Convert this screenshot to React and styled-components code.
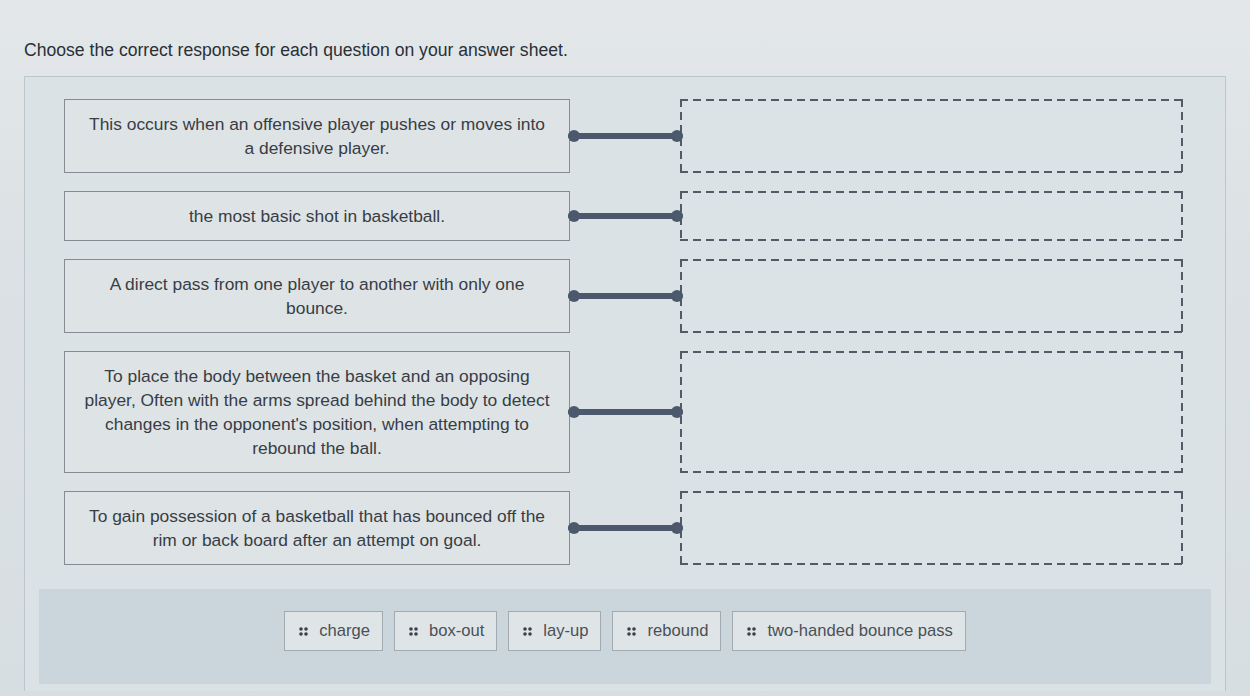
import React from 'react';
import styled, { createGlobalStyle } from 'styled-components';

const GlobalStyle = createGlobalStyle`
  * { box-sizing: border-box; }
  html, body {
    margin: 0;
    padding: 0;
    background: linear-gradient(180deg, #e3e7e9 0%, #dbe1e4 40%, #d7dee1 100%);
    font-family: "Liberation Sans", Arial, sans-serif;
    color: #33383f;
  }
`;

const Page = styled.div`
  width: 1250px;
  height: 696px;
  padding: 40px 24px 0 24px;
  overflow: hidden;
`;

const Instructions = styled.p`
  margin: 0 0 16px;
  font-size: 17.6px;
  line-height: 20px;
  color: #2a2f36;
`;

const Panel = styled.div`
  border: 1px solid #bcc6cb;
  border-bottom: none;
  background: #dbe2e5;
  padding: 22px 14px 7px;
`;

const Rows = styled.div`
  display: flex;
  flex-direction: column;
  gap: 18px;
  padding: 0 28px 0 25px;
`;

const Row = styled.div`
  display: grid;
  grid-template-columns: 506px 110px 1fr;
  align-items: stretch;
`;

const Prompt = styled.div`
  border: 1px solid #858d94;
  background: #dee4e6;
  padding: 12px 10px;
  text-align: center;
  font-size: 17.4px;
  line-height: 24px;
  color: #383d45;
`;

const Link = styled.div`
  position: relative;
  display: flex;
  align-items: center;
  margin: 0 -3px 0 -2px;

  &::before {
    content: '';
    flex: 1;
    height: 6px;
    background: #4c586b;
    border-radius: 3px;
  }
`;

const Dot = styled.span`
  position: absolute;
  top: 50%;
  ${p => (p.$side === 'left' ? 'left: 0;' : 'right: 0;')}
  width: 12px;
  height: 12px;
  margin-top: -6px;
  border-radius: 50%;
  background: #4c586b;
`;

const dash = '#535b67';

const Target = styled.div`
  background:
    repeating-linear-gradient(90deg, ${dash} 0 8px, transparent 8px 13px) top left / 100% 2px no-repeat,
    repeating-linear-gradient(90deg, ${dash} 0 8px, transparent 8px 13px) bottom left / 100% 2px no-repeat,
    repeating-linear-gradient(180deg, ${dash} 0 8px, transparent 8px 13px) top left / 2px 100% no-repeat,
    repeating-linear-gradient(180deg, ${dash} 0 8px, transparent 8px 13px) top right / 2px 100% no-repeat,
    #dce3e6;
`;

const Tray = styled.div`
  margin-top: 24px;
  background: #cbd6dc;
  padding: 22px 0 33px;
  display: flex;
  justify-content: center;
  gap: 11px;
`;

const Chip = styled.div`
  display: flex;
  align-items: center;
  gap: 11px;
  height: 40px;
  padding: 0 12px 0 14px;
  border: 1px solid #a3abb2;
  background: #dfe5e7;
  font-size: 16.6px;
  color: #4a5058;
`;

const Grip = () => (
  <svg width="9" height="9" viewBox="0 0 9 9">
    <circle cx="2" cy="2" r="1.8" fill="#3b4149" />
    <circle cx="7" cy="2" r="1.8" fill="#3b4149" />
    <circle cx="2" cy="7" r="1.8" fill="#3b4149" />
    <circle cx="7" cy="7" r="1.8" fill="#3b4149" />
  </svg>
);

const prompts = [
  ['This occurs when an offensive player pushes or moves into', 'a defensive player.'],
  ['the most basic shot in basketball.'],
  ['A direct pass from one player to another with only one', 'bounce.'],
  [
    'To place the body between the basket and an opposing',
    'player, Often with the arms spread behind the body to detect',
    "changes in the opponent's position, when attempting to",
    'rebound the ball.',
  ],
  ['To gain possession of a basketball that has bounced off the', 'rim or back board after an attempt on goal.'],
];

const answers = ['charge', 'box-out', 'lay-up', 'rebound', 'two-handed bounce pass'];

export default function App() {
  return (
    <Page>
      <GlobalStyle />
      <Instructions>Choose the correct response for each question on your answer sheet.</Instructions>
      <Panel>
        <Rows>
          {prompts.map((lines, i) => (
            <Row key={i}>
              <Prompt>
                {lines.map((l, j) => (
                  <div key={j}>{l}</div>
                ))}
              </Prompt>
              <Link>
                <Dot $side="left" />
                <Dot $side="right" />
              </Link>
              <Target />
            </Row>
          ))}
        </Rows>
        <Tray>
          {answers.map(a => (
            <Chip key={a}>
              <Grip />
              {a}
            </Chip>
          ))}
        </Tray>
      </Panel>
    </Page>
  );
}
